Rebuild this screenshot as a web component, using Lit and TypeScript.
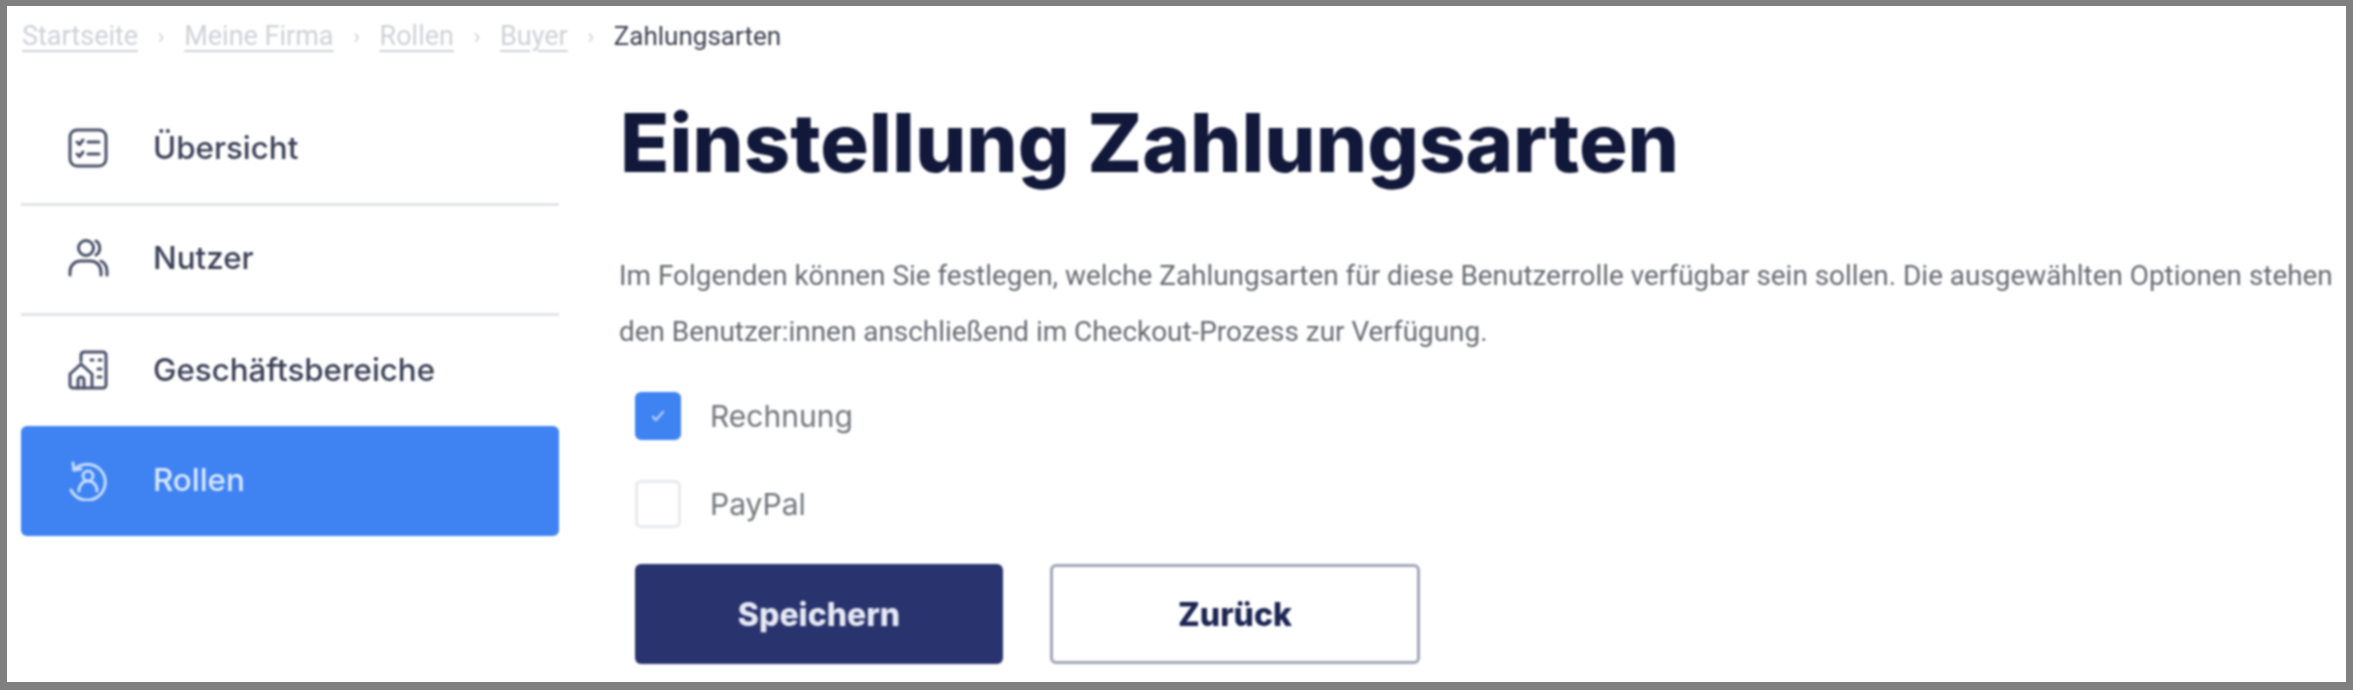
import { LitElement, html, css, svg } from "lit";
import { customElement } from "lit/decorators.js";

const icons = {
  overview: svg`<rect x="3" y="3" width="36" height="36" rx="7"/><path d="M10 15l2.5 2.5L16 13M10 27l2.5 2.5L16 25M21 15h11M21 27h11"/>`,
  users: svg`<circle cx="19" cy="11" r="7.5"/><path d="M29 4c5 3 5 11 0 14M3 38v-3c0-7 5-11 11-11h9c6 0 11 4 11 11v3M34 24c4 2 6 6 6 11v3"/>`,
  units: svg`<path d="M14 12V6a3 3 0 0 1 3-3h19a3 3 0 0 1 3 3v30a3 3 0 0 1-3 3H6a3 3 0 0 1-3-3V25l11-10 11 10v14"/><path d="M11 39V31a3 3 0 0 1 6 0v8M24 11h2M32 11h2M31 20h3M31 28h3"/>`,
  roles: svg`<path d="M6 4l1 7 7-1"/><path d="M7 11a18 18 0 1 1-3 20"/><circle cx="21" cy="17" r="5"/><path d="M12 32c0-6 4-10 9-10s9 4 9 10"/>`,
};

@customElement("app-root")
export class AppRoot extends LitElement {
  static styles = css`
    :host { display: block; }
    * { box-sizing: border-box; }
    .frame {
      width: 2353px; height: 690px; background: #fff; overflow: hidden;
      border: solid #808080; border-width: 6px 7px 8px 7px;
      font-family: Roboto, "Liberation Sans", sans-serif;
    }
    .inner { filter: blur(1.2px); height: 100%; }
    .crumbs {
      display: flex; align-items: center; height: 60px; padding-left: 15px;
      font-size: 27px; color: #cfd1d6;
    }
    .crumbs a { text-decoration: underline; text-underline-offset: 5px; }
    .crumbs .sep { width: 46px; text-align: center; font-size: 22px; }
    .crumbs .current { color: #3c4050; font-size: 26px; }
    .body { display: grid; grid-template-columns: 538px 1fr; column-gap: 61px; padding-left: 14px; }
    nav { display: flex; flex-direction: column; padding-top: 30px; }
    .item {
      display: flex; align-items: center; gap: 44px; height: 110px; padding: 0 0 3px 46px;
      border-bottom: 3px solid #e2e3e6; color: #3a3f55; font-family: Inter, sans-serif; font-size: 31.3px; font-weight: 500;
    }
    .item.last { border-bottom: none; }
    .item.active { background: #3f83f3; color: #d9e8ff; border: none; border-radius: 6px; }
    .item svg { width: 42px; height: 42px; fill: none; stroke: #4a5068; stroke-width: 3; stroke-linecap: round; stroke-linejoin: round; flex: none; }
    .item.active svg { stroke: #c5dcff; }
    main { padding-top: 32px; }
    h1 { margin: 0; font-family: Inter, sans-serif; font-weight: 800; font-size: 81px; line-height: 90px; color: #12183a; }
    p { margin: 60px 0 0 -1px; font-size: 27.9px; line-height: 56px; color: #666a70; white-space: nowrap; }
    .options { display: flex; flex-direction: column; gap: 40px; margin: 32px 0 0 15px; }
    .opt { display: flex; align-items: center; gap: 29px; font-family: Inter, sans-serif; font-size: 30px; color: #72757a; height: 48px; }
    .box { width: 46px; height: 48px; border-radius: 6px; border: 3px solid #e9eaec; display: flex; align-items: center; justify-content: center; }
    .box.on { background: #3f83f3; border-color: #3f83f3; }
    .box svg { width: 20px; height: 20px; fill: none; stroke: #a9cbfb; stroke-width: 2.5; stroke-linecap: round; stroke-linejoin: round; }
    .buttons { display: flex; gap: 47px; margin: 36px 0 0 15px; }
    button {
      height: 100px; border-radius: 6px; font-family: Inter, sans-serif; font-weight: 800; font-size: 32px;
    }
    .primary { width: 368px; background: #29346f; border: none; color: #e6e8f2; }
    .secondary { width: 370px; background: #fff; border: 3px solid #a0a6b8; color: #1d2553; }
  `;

  render() {
    const items: [keyof typeof icons, string, string][] = [
      ["overview", "Übersicht", ""],
      ["users", "Nutzer", ""],
      ["units", "Geschäftsbereiche", "last"],
      ["roles", "Rollen", "active last"],
    ];
    return html`<div class="frame"><div class="inner">
      <div class="crumbs">
        <a>Startseite</a><span class="sep">›</span>
        <a>Meine Firma</a><span class="sep">›</span>
        <a>Rollen</a><span class="sep">›</span>
        <a>Buyer</a><span class="sep">›</span>
        <span class="current">Zahlungsarten</span>
      </div>
      <div class="body">
        <nav>
          ${items.map(([ic, label, cls]) => html`<div class="item ${cls}">
            <svg viewBox="0 0 42 42">${icons[ic]}</svg><span>${label}</span>
          </div>`)}
        </nav>
        <main>
          <h1>Einstellung Zahlungsarten</h1>
          <p>Im Folgenden können Sie festlegen, welche Zahlungsarten für diese Benutzerrolle verfügbar sein sollen. Die ausgewählten Optionen stehen<br>den Benutzer:innen anschließend im Checkout-Prozess zur Verfügung.</p>
          <div class="options">
            <label class="opt"><span class="box on"><svg viewBox="0 0 20 20"><path d="M5 11l3 3 7-8"/></svg></span>Rechnung</label>
            <label class="opt"><span class="box"></span>PayPal</label>
          </div>
          <div class="buttons">
            <button class="primary">Speichern</button>
            <button class="secondary">Zurück</button>
          </div>
        </main>
      </div>
    </div></div>`;
  }
}
